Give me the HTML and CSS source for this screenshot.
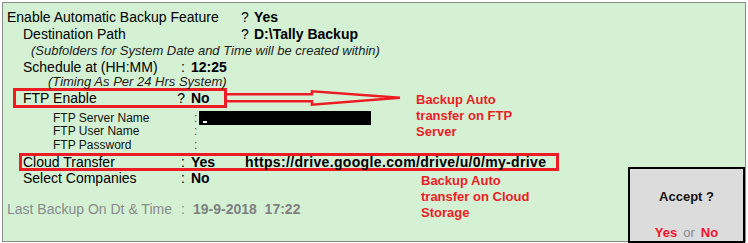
FILE: index.html
```html
<!DOCTYPE html>
<html>
<head>
<meta charset="utf-8">
<link rel="stylesheet" href="styles.css">
</head>
<body>
<div class="frame">
  <div class="row r17"><span class="lbl w-main">Enable Automatic Backup Feature</span><span class="q">?</span><span class="val">Yes</span></div>
  <div class="row r17 ind"><span class="lbl w-dest">Destination Path</span><span class="q">?</span><span class="val">D:\Tally Backup</span></div>
  <div class="note n1">(Subfolders for System Date and Time will be created within)</div>
  <div class="row r16 ind"><span class="lbl w-mid">Schedule at (HH:MM)</span><span class="sep">:</span><span class="val">12:25</span></div>
  <div class="note n2">(Timing As Per 24 Hrs System)</div>
  <div class="hl hl-ftp"><span class="lbl w-mid">FTP Enable</span><span class="sep">?</span><span class="val">No</span></div>
  <div class="sub sub-first"><span class="sub-lbl">FTP Server Name</span><span class="sub-sep">:</span><span class="field"><span class="cursor"></span></span></div>
  <div class="sub"><span class="sub-lbl">FTP User Name</span><span class="sub-sep">:</span></div>
  <div class="sub"><span class="sub-lbl">FTP Password</span><span class="sub-sep">:</span></div>
  <div class="hl hl-cloud"><span class="lbl w-mid">Cloud Transfer</span><span class="sep">:</span><span class="val yes">Yes</span><span class="val url">https://drive.google.com/drive/u/0/my-drive</span></div>
  <div class="row r14 ind"><span class="lbl w-mid">Select Companies</span><span class="sep">:</span><span class="val">No</span></div>
  <div class="row last"><span class="lbl w-last">Last Backup On Dt &amp; Time</span><span class="sep">:</span><span class="val last-val">19-9-2018&nbsp; 17:22</span></div>
</div>

<svg class="arrow" width="180" height="24" viewBox="0 0 180 24">
  <path d="M0,8.3 H86 V5.3 L174,11.8 L86,18.7 V15.3 H0" fill="none" stroke="#ed1c24" stroke-width="2.6" stroke-linejoin="miter"/>
</svg>

<div class="annot annot-ftp">Backup Auto<br>transfer on FTP<br>Server</div>
<div class="annot annot-cloud">Backup Auto<br>transfer on Cloud<br>Storage</div>

<div class="accept">
  <div class="accept-title">Accept ?</div>
  <div class="accept-opts"><span class="opt">Yes</span><span class="or">or</span><span class="opt">No</span></div>
</div>
</body>
</html>
```

FILE: styles.css
```css
html, body {
  margin: 0;
  padding: 0;
  background: #ffffff;
}
body {
  position: relative;
  width: 748px;
  height: 243px;
  overflow: hidden;
  font-family: "Liberation Sans", Arial, sans-serif;
  color: #000;
}
.frame {
  box-sizing: border-box;
  margin: 2px 0 0 2px;
  width: 744px;
  height: 240px;
  border: 1px solid #8c8c8c;
  background: #d4f1d4;
  padding: 6px 0 0 4px;
  font-size: 14px;
}
.row {
  display: flex;
  white-space: pre;
}
.r17 { line-height: 17px; }
.r16 { line-height: 16px; }
.r14 { line-height: 14px; }
.ind { padding-left: 16px; }
.lbl { flex: none; }
.w-main { width: 234px; }
.w-dest { width: 218px; }
.w-mid { width: 153px; }
.w-last { width: 169px; }
.q {
  flex: none;
  width: 13px;
}
.sep {
  flex: none;
  width: 9px;
  padding-right: 6px;
  text-align: right;
}
.val { font-weight: bold; }
.note {
  font-style: italic;
  font-size: 13px;
  color: #1c1c1c;
  white-space: pre;
}
.n1 { line-height: 16px; margin-left: 24px; }
.n2 { line-height: 13px; margin-left: 41px; }

.hl {
  display: flex;
  box-sizing: border-box;
  border: 3px solid #ed1c24;
  white-space: pre;
}
.hl-ftp {
  width: 214px;
  height: 20px;
  margin-left: 6px;
  padding-left: 7px;
  line-height: 14px;
}
.hl-cloud {
  width: 540px;
  height: 18px;
  margin-left: 12px;
  margin-top: 1px;
  padding-left: 1px;
  line-height: 12px;
}
.yes { width: 54px; flex: none; }
.url { letter-spacing: 0.35px; }

.sub {
  display: flex;
  font-size: 12px;
  line-height: 13.5px;
  height: 13.5px;
  color: #111;
  padding-left: 46px;
  white-space: pre;
}
.sub-first {
  margin-top: 3px;
  height: 14px;
  line-height: 14px;
}
.sub-lbl { width: 141px; flex: none; }
.sub-sep { width: 5px; flex: none; color: #555; }
.field {
  position: relative;
  display: block;
  width: 172px;
  height: 14px;
  background: #000;
}
.cursor {
  position: absolute;
  left: 4px;
  top: 10px;
  width: 4px;
  height: 2px;
  background: #fff;
}

.last {
  margin-top: 16px;
  line-height: 16px;
  color: #8a8a8a;
}
.last-val {
  margin-left: 2px;
  color: #808080;
}

.arrow {
  position: absolute;
  left: 226px;
  top: 86px;
}
.annot {
  position: absolute;
  font-size: 13px;
  line-height: 16px;
  font-weight: bold;
  color: #ed1c24;
  white-space: nowrap;
}
.annot-ftp { left: 416px; top: 91.5px; }
.annot-cloud { left: 421px; top: 172.5px; }

.accept {
  position: absolute;
  left: 628px;
  top: 167px;
  width: 117px;
  height: 76px;
  box-sizing: border-box;
  border: 2px solid #000;
  background: #dcdcdc;
  display: flex;
  flex-direction: column;
  align-items: center;
  font-size: 13px;
  line-height: 16px;
}
.accept-title {
  margin-top: 19.5px;
  font-weight: bold;
  color: #111;
}
.accept-opts {
  margin-top: 20px;
  white-space: nowrap;
}
.opt {
  font-weight: bold;
  color: #f0142a;
}
.or {
  color: #8a8a8a;
  margin: 0 6px;
}
```
